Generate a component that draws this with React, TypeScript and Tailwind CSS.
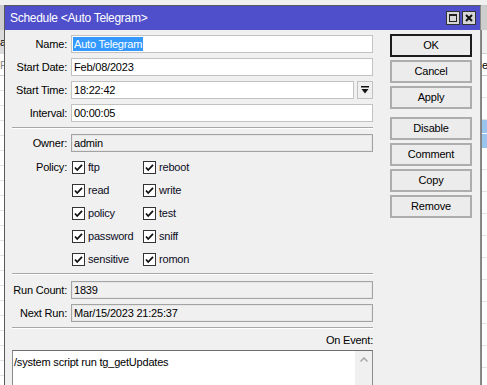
import React from 'react';

const labelCls = 'w-[56px] shrink-0 text-right pr-[1px] text-black';
const editCls = 'h-[18px] flex-1 bg-white border border-[#c2c2c2] pl-[2px] flex items-center text-black leading-none';
const roCls = 'h-[18px] flex-1 bg-[#f0f0f0] border border-[#a3a3a3] shadow-[inset_0_0_0_1px_#e6e6e6] pl-[2px] flex items-center text-black leading-none';

function Field({ label, children }: { label: string; children: React.ReactNode }) {
	return (
		<div className="flex items-center h-[18px] gap-[3px]">
			<div className={labelCls}>{label}</div>
			{children}
		</div>
	);
}

function Sep() {
	return <div className="h-[2px] border-t border-[#a8a8a8] border-b border-b-white" />;
}

function Check({ label }: { label: string }) {
	return (
		<div className="flex items-center gap-[3px] h-[18px]">
			<svg width="13" height="13" viewBox="0 0 13 13" className="shrink-0">
				<rect x="0.5" y="0.5" width="12" height="12" fill="#fff" stroke="#333" />
				<path d="M3 6.5 L5.2 9 L10 3.8" fill="none" stroke="#111" strokeWidth="1.8" />
			</svg>
			<span className="text-[#0c0c24]">{label}</span>
		</div>
	);
}

function Btn({ children, def }: { children: React.ReactNode; def?: boolean }) {
	return (
		<div
			className={`h-[23px] flex items-center justify-center bg-[#ececec] text-black ${
				def ? 'border-2 border-[#1c1c1c]' : 'border-2 border-[#adadad]'
			}`}
		>
			{children}
		</div>
	);
}

export default function App() {
	const policy = [
		['ftp', 'reboot'],
		['read', 'write'],
		['policy', 'test'],
		['password', 'sniff'],
		['sensitive', 'romon'],
	];

	return (
		<div className="relative w-[487px] h-[385px] overflow-hidden bg-[#f0f0f0] font-['Liberation_Sans',Arial,sans-serif] text-[11px] tracking-[-0.2px]">
			{/* background window behind the dialog */}
			<div className="flex flex-col h-full">
				<div className="h-[6px] bg-[#f0f0f0] border-b border-[#c8c8c8]" />
				<div className="h-[24px] bg-[#cdcdcd]" />
				<div className="flex flex-1">
					<div className="w-[4px] flex flex-col">
						<div className="h-[24px] bg-[#dcdcdc] text-black overflow-hidden leading-[24px]">ar</div>
						<div className="h-[22px] bg-white border-b border-[#d0d0d0] text-[#888] overflow-hidden leading-[22px]">F</div>
						<div className="flex-1 bg-[repeating-linear-gradient(to_bottom,#fff_0,#fff_14px,#e2e2e2_14px,#e2e2e2_15px)]" />
					</div>
					<div className="flex-1" />
					<div className="w-[6px] flex flex-col border-l border-[#808080]">
						<div className="h-[24px] bg-[#f0f0f0] border-b border-[#d0d0d0]" />
						<div className="h-[22px] bg-white border-b border-[#c8c8c8] text-black overflow-hidden leading-[22px]">e</div>
						<div className="h-[44px] bg-[repeating-linear-gradient(to_bottom,#fff_0,#fff_21px,#e2e2e2_21px,#e2e2e2_22px)]" />
						<div className="h-[14px] bg-[#99c4ee] border-b border-white" />
						<div className="h-[14px] bg-[#99c4ee]" />
						<div className="flex-1 bg-[repeating-linear-gradient(to_bottom,#fff_0,#fff_21px,#e2e2e2_21px,#e2e2e2_22px)]" />
					</div>
				</div>
			</div>

			{/* dialog window */}
			<div className="absolute left-[4px] top-[5px] w-[477px] h-[390px] border border-[#5a5a5a] border-r-[#8a8a8a] bg-[#f0f0f0] flex flex-col">
				<div className="h-[24px] bg-[#4f4fcb] flex items-center pl-[5px] pr-[4px] text-white text-[12px] tracking-[-0.3px]">
					<span className="flex-1">Schedule &lt;Auto Telegram&gt;</span>
					<div className="flex gap-[2px]">
						<div className="w-[14px] h-[14px] bg-[#d6d6d6] border border-[#333] flex items-center justify-center">
							<div className="w-[8px] h-[8px] border border-[#222] border-t-2" />
						</div>
						<div className="w-[14px] h-[14px] bg-[#d6d6d6] border border-[#333] flex items-center justify-center">
							<svg width="8" height="8" viewBox="0 0 8 8">
								<path d="M1 1 L7 7 M7 1 L1 7" stroke="#111" strokeWidth="2" />
							</svg>
						</div>
					</div>
				</div>

				<div className="flex flex-1 pl-[7px] pr-[8px]">
					{/* form column */}
					<div className="w-[361px] flex flex-col pt-[5px]">
						<div className="flex flex-col gap-[5px]">
							<Field label="Name:">
								<div className={editCls}>
									<span className="bg-[#3399ff] text-white px-[1px] -ml-[1px] leading-[14px]">Auto Telegram</span>
								</div>
							</Field>
							<Field label="Start Date:">
								<div className={editCls}>Feb/08/2023</div>
							</Field>
							<Field label="Start Time:">
								<div className={editCls}>18:22:42</div>
								<div className="w-[16px] h-[18px] bg-[#f0f0f0] border border-[#c2c2c2] flex items-center justify-center">
									<svg width="8" height="8" viewBox="0 0 8 8">
										<rect x="0" y="0" width="8" height="1.5" fill="#111" />
										<path d="M0.5 3 H7.5 L4 7.5 Z" fill="#111" />
									</svg>
								</div>
							</Field>
							<Field label="Interval:">
								<div className={editCls}>00:00:05</div>
							</Field>
						</div>

						<div className="mt-[5px] mb-[5px]">
							<Sep />
						</div>

						<Field label="Owner:">
							<div className={roCls}>admin</div>
						</Field>

						<div className="flex gap-[3px] mt-[6px]">
							<div className={`${labelCls} h-[18px] leading-[18px]`}>Policy:</div>
							<div className="flex flex-col gap-[5px] pl-[1px]">
								{policy.map(([a, b]) => (
									<div key={a} className="flex">
										<div className="w-[71px]">
											<Check label={a} />
										</div>
										<Check label={b} />
									</div>
								))}
							</div>
						</div>

						<div className="mt-[5px] mb-[6px]">
							<Sep />
						</div>

						<div className="flex flex-col gap-[5px]">
							<Field label="Run Count:">
								<div className={roCls}>1839</div>
							</Field>
							<Field label="Next Run:">
								<div className={roCls}>Mar/15/2023 21:25:37</div>
							</Field>
						</div>

						<div className="mt-[5px]">
							<Sep />
						</div>

						<div className="h-[18px] mt-[2px] flex items-center justify-end text-black">On Event:</div>

						<div className="mt-[1px] h-[40px] border border-[#8c8c8c] border-t-[#6f6f6f] bg-white flex">
							<div className="flex-1 pl-[1px] pt-[3px] text-black">/system script run tg_getUpdates</div>
							<div className="w-[17px] bg-[#f0f0f0] flex justify-center pt-[6px]">
								<svg width="8" height="5" viewBox="0 0 8 5">
									<path d="M0.5 4.5 L4 1 L7.5 4.5" fill="none" stroke="#a8a8a8" strokeWidth="1.5" />
								</svg>
							</div>
						</div>
					</div>

					{/* buttons column */}
					<div className="w-[82px] ml-[17px] flex flex-col pt-[4px]">
						<div className="flex flex-col gap-[3px]">
							<Btn def>OK</Btn>
							<Btn>Cancel</Btn>
							<Btn>Apply</Btn>
						</div>
						<div className="flex flex-col gap-[3px] mt-[8px]">
							<Btn>Disable</Btn>
							<Btn>Comment</Btn>
							<Btn>Copy</Btn>
							<Btn>Remove</Btn>
						</div>
					</div>
				</div>
			</div>
		</div>
	);
}
